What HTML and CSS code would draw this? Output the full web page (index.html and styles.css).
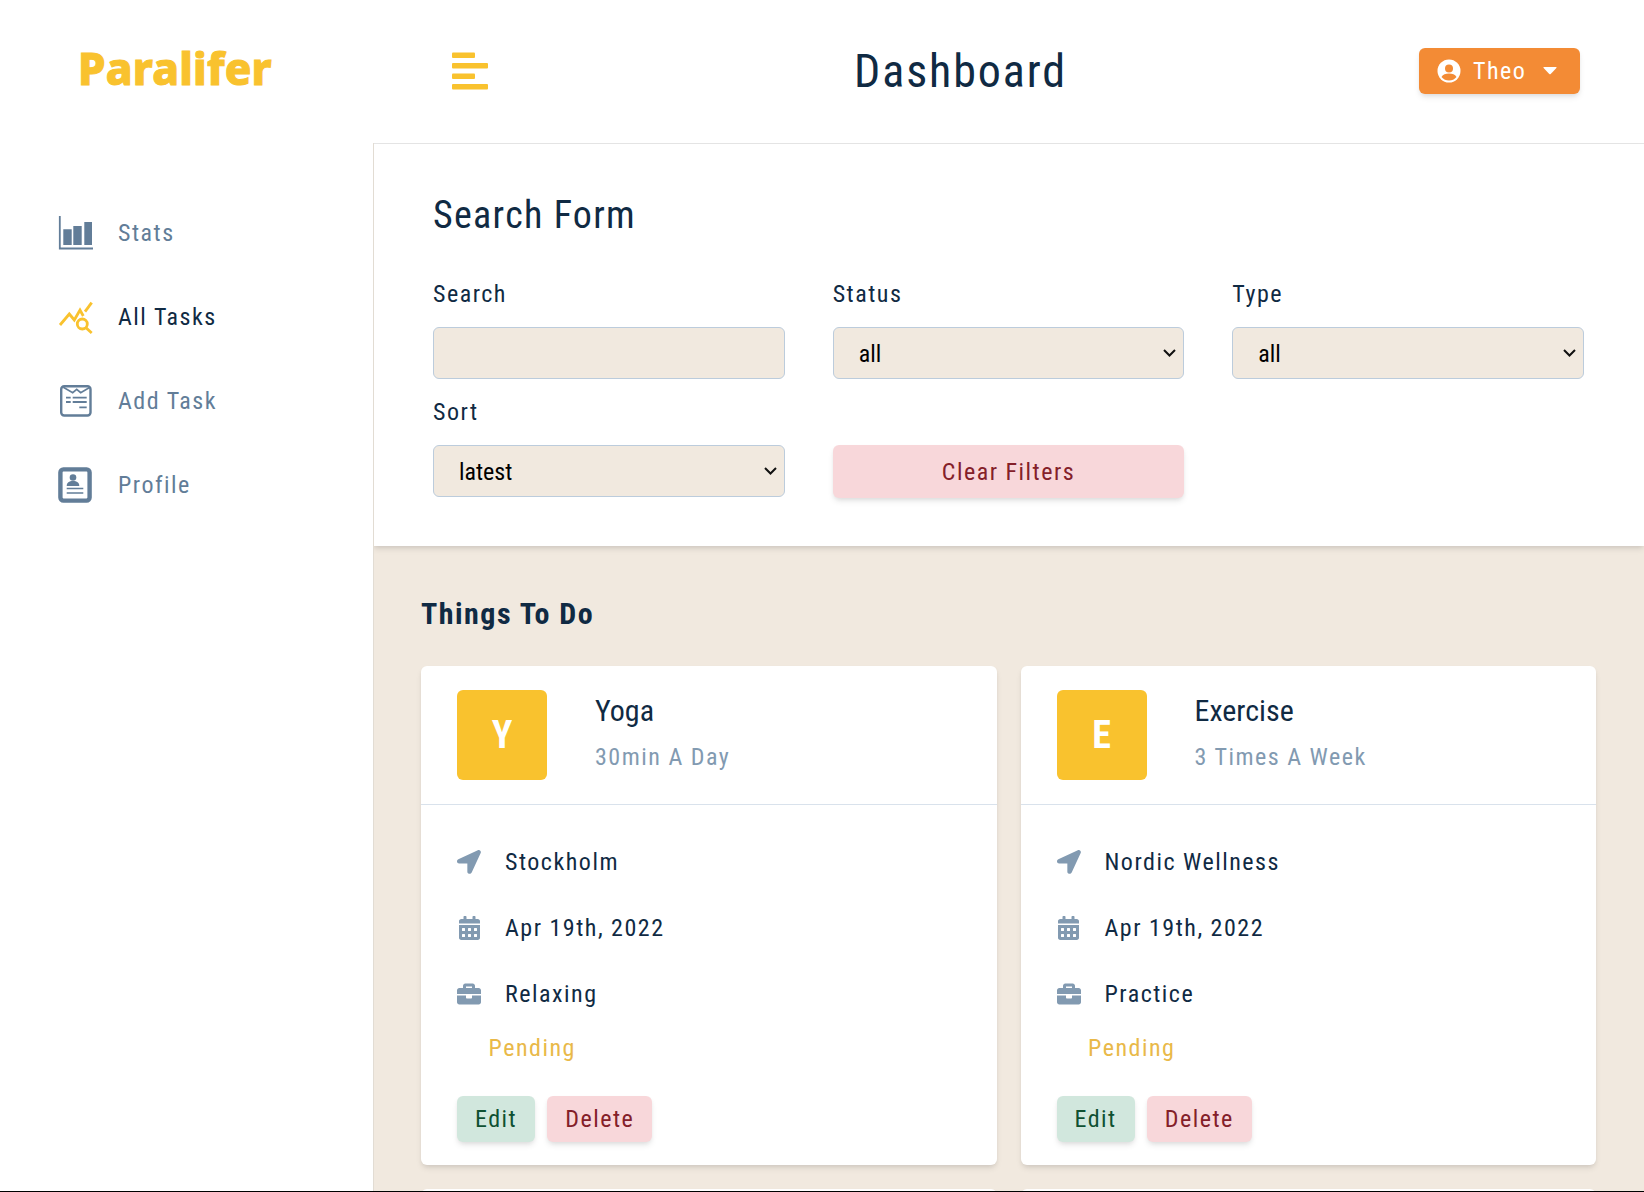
FILE: index.html
```html
<!DOCTYPE html>
<html lang="en">
<head>
<meta charset="utf-8">
<title>Dashboard</title>
<link rel="stylesheet" href="styles.css">
</head>
<body>
<div class="app">
  <aside class="sidebar">
    <div class="logo-row"><span class="logo">Paralifer</span></div>
    <nav class="nav">
      <a class="nav-link"><span class="nav-icon"><svg width="36" height="36" viewBox="0 0 36 36"><path d="M1.800 1v32.500H35" fill="none" stroke="#627d98" stroke-width="1.800"/><path fill="#627d98" d="M5.300 14.300h8.400V30H5.300zM15.300 11h8.400v19h-8.400zM26.300 7H34v23h-7.700z"/></svg></span><span>Stats</span></a>
      <a class="nav-link active"><span class="nav-icon"><svg width="36" height="36" viewBox="0 0 36 36"><g fill="none" stroke="#f9c22e" stroke-width="2.800"><path d="M2 26l9.300-11 5 6L22 11l3.300 6"/><path d="M27 12.700l6.700-9"/><circle cx="24.300" cy="25" r="5"/><path d="M28 28.700l5.700 5.300"/></g></svg></span><span>All Tasks</span></a>
      <a class="nav-link"><span class="nav-icon"><svg width="36" height="36" viewBox="0 0 36 36"><g fill="none" stroke="#627d98"><rect x="3.200" y="3.200" width="29.300" height="29.300" rx="3" stroke-width="2.400"/><path d="M5.300 4.300l9.400 5.400 4-3.400 4 3.400L32 4.300" stroke-width="1.600"/><path d="M8 14.700h4.700M14.700 14.700h14M8 19h4.700M14.700 19h14M21.300 24.300h7.400" stroke-width="1.800"/></g></svg></span><span>Add Task</span></a>
      <a class="nav-link"><span class="nav-icon"><svg width="36" height="36" viewBox="0 0 36 36"><rect x="2.400" y="2.400" width="29.200" height="31.200" rx="3" fill="none" stroke="#627d98" stroke-width="4.400"/><circle cx="15" cy="10.500" r="3.300" fill="#627d98"/><path fill="#627d98" d="M8.700 19c0-3.500 2.300-5 6.300-5s6.300 1.500 6.300 5z"/><path d="M8.700 21.500h16.600M8.700 26h16.600" stroke="#627d98" stroke-width="1.700"/></svg></span><span>Profile</span></a>
    </nav>
  </aside>
  <div class="content">
    <header class="topbar">
      <button class="toggle" aria-label="Toggle"><svg width="36" height="38" viewBox="0 0 36 38" fill="#f9c22e"><rect x="0" y=".5" width="23" height="5.500" rx="1"/><rect x="0" y="11" width="36" height="5.500" rx="1"/><rect x="0" y="21.500" width="23" height="5.500" rx="1"/><rect x="0" y="32" width="36" height="5.500" rx="1"/></svg></button>
      <h1 class="page-title">Dashboard</h1>
      <button class="user-btn"><svg width="24" height="24" viewBox="0 0 24 24"><circle cx="12" cy="12" r="11.500" fill="#fff"/><circle cx="12" cy="9.500" r="4" fill="#f38b35"/><path d="M4.500 18c1.500-3 4-3.500 7.500-3.500s6 .5 7.500 3.500c-2 2.500-4.500 3.500-7.500 3.500s-5.500-1-7.500-3.500z" fill="#f38b35"/></svg><span>Theo</span><svg class="caret" width="14" height="8" viewBox="0 0 14 8"><path d="M1 0h12q1 0 .4 1L7.700 7q-.7.700-1.400 0L.6 1Q0 0 1 0z" fill="#fff"/></svg></button>
    </header>
    <section class="search-panel">
      <h2 class="form-title">Search Form</h2>
      <div class="form-grid">
        <div class="field"><label class="label">Search</label><input class="control" type="text"></div>
        <div class="field"><label class="label">Status</label><select class="control"><option>all</option></select></div>
        <div class="field"><label class="label">Type</label><select class="control"><option>all</option></select></div>
        <div class="field"><label class="label">Sort</label><select class="control"><option>latest</option></select></div>
        <div class="field field-end"><button class="clear-btn">Clear Filters</button></div>
      </div>
    </section>
    <main class="tasks">
      <h3 class="tasks-title">Things To Do</h3>
      <div class="cards">
        <article class="card">
          <div class="card-head"><div class="avatar">Y</div><div><div class="task-name">Yoga</div><div class="task-sub">30min A Day</div></div></div>
          <div class="card-body">
            <div class="info"><span class="info-icon"><svg width="24" height="24" viewBox="0 0 512 512"><path fill="#829ab1" d="M444.500 3.500L28.700 195.400c-48 22.400-32 92.800 16 92.800H220.600v175.900c0 48 70.400 64 92.800 16L505.300 64.400c16-38.400-22.400-76.800-60.800-60.900z"/></svg></span><span>Stockholm</span></div>
            <div class="info"><span class="info-icon"><svg width="21" height="24" viewBox="0 0 448 512"><path fill="#829ab1" d="M0 464c0 26.500 21.500 48 48 48h352c26.500 0 48-21.500 48-48V192H0v272zm320-196c0-6.600 5.400-12 12-12h40c6.600 0 12 5.400 12 12v40c0 6.600-5.400 12-12 12h-40c-6.600 0-12-5.400-12-12v-40zm0 128c0-6.600 5.400-12 12-12h40c6.600 0 12 5.400 12 12v40c0 6.600-5.400 12-12 12h-40c-6.600 0-12-5.400-12-12v-40zM192 268c0-6.600 5.400-12 12-12h40c6.600 0 12 5.400 12 12v40c0 6.600-5.400 12-12 12h-40c-6.600 0-12-5.400-12-12v-40zm0 128c0-6.600 5.400-12 12-12h40c6.600 0 12 5.400 12 12v40c0 6.600-5.400 12-12 12h-40c-6.600 0-12-5.400-12-12v-40zM64 268c0-6.600 5.400-12 12-12h40c6.600 0 12 5.400 12 12v40c0 6.600-5.400 12-12 12H76c-6.600 0-12-5.400-12-12v-40zm0 128c0-6.600 5.400-12 12-12h40c6.600 0 12 5.400 12 12v40c0 6.600-5.400 12-12 12H76c-6.600 0-12-5.400-12-12v-40zM400 64h-48V16c0-8.800-7.200-16-16-16h-32c-8.800 0-16 7.200-16 16v48H160V16c0-8.800-7.200-16-16-16h-32c-8.800 0-16 7.200-16 16v48H48C21.500 64 0 85.500 0 112v48h448v-48c0-26.500-21.500-48-48-48z"/></svg></span><span>Apr 19th, 2022</span></div>
            <div class="info"><span class="info-icon"><svg width="24" height="24" viewBox="0 0 512 512"><path fill="#829ab1" d="M320 336c0 8.800-7.200 16-16 16h-96c-8.800 0-16-7.200-16-16v-48H0v144c0 25.600 22.400 48 48 48h416c25.600 0 48-22.400 48-48V288H320v48zm144-208h-80V80c0-25.600-22.400-48-48-48H176c-25.600 0-48 22.400-48 48v48H48c-25.600 0-48 22.400-48 48v80h512v-80c0-25.600-22.400-48-48-48zm-144 0H192V96h128v32z"/></svg></span><span>Relaxing</span></div>
            <div class="status">Pending</div>
            <div class="actions"><button class="edit-btn">Edit</button><button class="delete-btn">Delete</button></div>
          </div>
        </article>
        <article class="card">
          <div class="card-head"><div class="avatar">E</div><div><div class="task-name">Exercise</div><div class="task-sub">3 Times A Week</div></div></div>
          <div class="card-body">
            <div class="info"><span class="info-icon"><svg width="24" height="24" viewBox="0 0 512 512"><path fill="#829ab1" d="M444.500 3.500L28.700 195.400c-48 22.400-32 92.800 16 92.800H220.600v175.900c0 48 70.400 64 92.800 16L505.300 64.400c16-38.400-22.400-76.800-60.800-60.900z"/></svg></span><span>Nordic Wellness</span></div>
            <div class="info"><span class="info-icon"><svg width="21" height="24" viewBox="0 0 448 512"><path fill="#829ab1" d="M0 464c0 26.500 21.500 48 48 48h352c26.500 0 48-21.500 48-48V192H0v272zm320-196c0-6.600 5.400-12 12-12h40c6.600 0 12 5.400 12 12v40c0 6.600-5.400 12-12 12h-40c-6.600 0-12-5.400-12-12v-40zm0 128c0-6.600 5.400-12 12-12h40c6.600 0 12 5.400 12 12v40c0 6.600-5.400 12-12 12h-40c-6.600 0-12-5.400-12-12v-40zM192 268c0-6.600 5.400-12 12-12h40c6.600 0 12 5.400 12 12v40c0 6.600-5.400 12-12 12h-40c-6.600 0-12-5.400-12-12v-40zm0 128c0-6.600 5.400-12 12-12h40c6.600 0 12 5.400 12 12v40c0 6.600-5.400 12-12 12h-40c-6.600 0-12-5.400-12-12v-40zM64 268c0-6.600 5.400-12 12-12h40c6.600 0 12 5.400 12 12v40c0 6.600-5.400 12-12 12H76c-6.600 0-12-5.400-12-12v-40zm0 128c0-6.600 5.400-12 12-12h40c6.600 0 12 5.400 12 12v40c0 6.600-5.400 12-12 12H76c-6.600 0-12-5.400-12-12v-40zM400 64h-48V16c0-8.800-7.200-16-16-16h-32c-8.800 0-16 7.200-16 16v48H160V16c0-8.800-7.200-16-16-16h-32c-8.800 0-16 7.200-16 16v48H48C21.500 64 0 85.500 0 112v48h448v-48c0-26.500-21.500-48-48-48z"/></svg></span><span>Apr 19th, 2022</span></div>
            <div class="info"><span class="info-icon"><svg width="24" height="24" viewBox="0 0 512 512"><path fill="#829ab1" d="M320 336c0 8.800-7.200 16-16 16h-96c-8.800 0-16-7.200-16-16v-48H0v144c0 25.600 22.400 48 48 48h416c25.600 0 48-22.400 48-48V288H320v48zm144-208h-80V80c0-25.600-22.400-48-48-48H176c-25.600 0-48 22.400-48 48v48H48c-25.600 0-48 22.400-48 48v80h512v-80c0-25.600-22.400-48-48-48zm-144 0H192V96h128v32z"/></svg></span><span>Practice</span></div>
            <div class="status">Pending</div>
            <div class="actions"><button class="edit-btn">Edit</button><button class="delete-btn">Delete</button></div>
          </div>
        </article>
        <article class="card"></article>
        <article class="card"></article>
      </div>
    </main>
  </div>
</div>
</body>
</html>
```
FILE: styles.css
```css
* { box-sizing: border-box; }
html, body { margin: 0; height: 100%; overflow: hidden; }
body { font-family: Roboto, "Liberation Sans", sans-serif; font-stretch: 75%; color: #102a43; background: #000; }
button, input, select { font: inherit; font-stretch: 75%; }
.app { display: flex; height: 1191px; overflow: hidden; }
.sidebar { width: 373px; flex: none; display: flex; flex-direction: column; background: #fff; }
.logo-row { height: 143px; flex: none; padding: 36px 0 0 78px; }
.logo { font-family: "Noto Sans", sans-serif; font-stretch: normal; font-weight: 800; font-size: 44px; line-height: 64px; letter-spacing: .2px; color: #f9c22e; -webkit-text-stroke: 1px #f9c22e; }
.nav { flex: 1; display: flex; flex-direction: column; padding-top: 48px; position: relative; z-index: 1; box-shadow: 1px 0 0 #e2dcd3; background: #fff; }
.nav-link { display: flex; align-items: center; height: 84px; padding-left: 58px; gap: 24px; font-size: 24px; letter-spacing: 1.5px; color: #627d98; }
.nav-link.active { color: #102a43; }
.nav-icon { display: flex; width: 36px; height: 36px; }
.content { flex: 1; min-width: 0; display: flex; flex-direction: column; background: #f1e9df; }
.topbar { height: 144px; flex: none; background: #fff; border-bottom: 1px solid #e5e5e5; display: flex; align-items: center; justify-content: space-between; padding: 0 64px 2px 79px; }
.toggle { border: 0; background: none; padding: 0; width: 36px; height: 38px; }
.page-title { margin: 0 0 0 14px; font-weight: 400; font-size: 46px; letter-spacing: 1.9px; }
.user-btn { display: flex; align-items: center; gap: 12px; width: 161px; height: 46px; padding: 0 18px; border: 0; border-radius: 6px; background: #f38b35; color: #fff; font-size: 24px; letter-spacing: 1.5px; box-shadow: 0 4px 6px -1px rgba(0,0,0,.1), 0 2px 4px -1px rgba(0,0,0,.06); }
.caret { margin-left: 5px; }
.search-panel { height: 402px; flex: none; background: #fff; padding: 49px 60px 0; box-shadow: 0 4px 6px -1px rgba(0,0,0,.1), 0 2px 4px -1px rgba(0,0,0,.06); position: relative; }
.form-title { margin: 0 0 39px; font-weight: 400; font-size: 38px; line-height: 44px; letter-spacing: 1.3px; }
.form-grid { display: grid; grid-template-columns: repeat(3, 1fr); column-gap: 48px; }
.field { display: flex; flex-direction: column; height: 118px; }
.field-end { padding-top: 51px; }
.label { font-size: 24px; letter-spacing: 1.5px; line-height: 36px; margin-bottom: 15px; }
.control { height: 52px; flex: none; width: 100%; background: #f1e9df; border: 1px solid #bcccdc; border-radius: 6px; padding: 0 25px; font-size: 24px; color: #000; }
select.control { appearance: none; padding-top: 2px; background-image: url("data:image/svg+xml,%3Csvg xmlns='http://www.w3.org/2000/svg' width='13' height='8' viewBox='0 0 13 8'%3E%3Cpath d='M1 1l5.500 5.500L12 1' fill='none' stroke='%23111' stroke-width='2'/%3E%3C/svg%3E"); background-repeat: no-repeat; background-position: right 7px center; }
.clear-btn { height: 53px; flex: none; border: 0; border-radius: 6px; background: #f8d7da; color: #842029; font-size: 24px; letter-spacing: 1.5px; box-shadow: 0 4px 6px -1px rgba(0,0,0,.1), 0 2px 4px -1px rgba(0,0,0,.06); }
.tasks { flex: 1; min-height: 0; overflow: hidden; padding: 48px 48px 0; }
.tasks-title { margin: 0 0 32px; font-size: 30px; line-height: 40px; letter-spacing: 1.5px; font-weight: 700; }
.cards { display: grid; grid-template-columns: repeat(2, 1fr); gap: 24px; }
.card { background: #fff; border-radius: 6px; height: 499px; box-shadow: 0 4px 6px -1px rgba(0,0,0,.1), 0 2px 4px -1px rgba(0,0,0,.06); }
.card-head { height: 139px; display: flex; align-items: flex-start; gap: 48px; padding: 24px 36px; border-bottom: 1px solid #d9e2ec; }
.avatar { width: 90px; height: 90px; border-radius: 6px; background: #f9c22e; color: #fff; font-size: 38px; font-weight: 700; display: flex; align-items: center; justify-content: center; }
.task-name { font-size: 30px; line-height: 44px; margin-top: -1px; }
.task-sub { font-size: 24px; line-height: 44px; letter-spacing: 1.5px; color: #829ab1; margin-top: 2px; }
.card-body { padding: 24px 36px 0; }
.info { display: flex; align-items: center; height: 66px; font-size: 24px; letter-spacing: 1.5px; }
.info-icon { width: 24px; margin-right: 24px; display: flex; justify-content: center; }
.status { font-size: 24px; letter-spacing: 1.5px; color: #e9b949; line-height: 44px; padding-left: 31.500px; margin-top: -1px; }
.actions { display: flex; gap: 12px; margin-top: 26px; }
.edit-btn, .delete-btn { height: 46px; border: 0; border-radius: 6px; padding: 0 18px; font-size: 24px; letter-spacing: 1.5px; box-shadow: 0 4px 6px -1px rgba(0,0,0,.1), 0 2px 4px -1px rgba(0,0,0,.06); }
.edit-btn { background: #d1e7dd; color: #0f5132; }
.delete-btn { background: #f8d7da; color: #842029; }
```
